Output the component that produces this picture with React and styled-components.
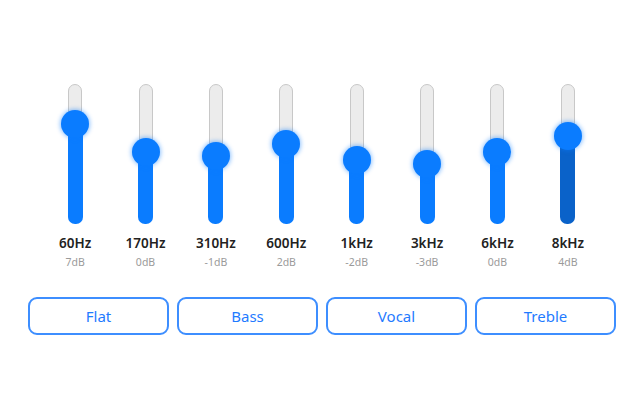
import React from "react";
import styled, { createGlobalStyle } from "styled-components";

const GlobalStyle = createGlobalStyle`
    html, body {
        margin: 0;
        padding: 0;
        background: #fff;
    }
    body {
        font-family: "Noto Sans", "Open Sans", sans-serif;
    }
`;

const Page = styled.div`
    width: 640px;
    height: 400px;
    display: flex;
    flex-direction: column;
    align-items: center;
    padding-top: 84px;
    box-sizing: border-box;
`;

const Bands = styled.div`
    display: grid;
    grid-template-columns: repeat(8, 70.4px);
    margin-left: 3px;
`;

const Band = styled.div`
    display: flex;
    flex-direction: column;
    align-items: center;
`;

const Track = styled.div`
    position: relative;
    width: 14px;
    height: 139px;
    box-sizing: border-box;
    border: 1.5px solid #c8c8c8;
    border-radius: 7px;
    background: #ececec;
`;

const Fill = styled.div`
    position: absolute;
    left: -1.5px;
    right: -1.5px;
    bottom: -1.5px;
    border-radius: 7px;
    background: ${(p) => (p.$active ? "#0a62c9" : "#0a7cff")};
`;

const Thumb = styled.div`
    position: absolute;
    left: 50%;
    width: 28px;
    height: 28px;
    margin-left: -14px;
    margin-top: -14px;
    border-radius: 50%;
    background: #0a7cff;
    box-shadow: 0 0 4px 1px rgba(10, 124, 255, 0.45);
`;

const Freq = styled.div`
    margin-top: 11px;
    font-size: 13.5px;
    font-weight: 600;
    color: #222;
    line-height: 18px;
`;

const Gain = styled.div`
    margin-top: 3px;
    font-size: 10.5px;
    color: #9a9a9a;
    line-height: 14px;
`;

const Presets = styled.div`
    display: grid;
    grid-template-columns: repeat(4, 141px);
    column-gap: 8px;
    margin-top: 28px;
    margin-left: 4px;
`;

const PresetButton = styled.button`
    height: 38px;
    border: 2px solid #3d8eff;
    border-radius: 9px;
    background: #fff;
    color: #1f7bff;
    font-family: "Noto Sans", "Open Sans", sans-serif;
    font-size: 15px;
    cursor: pointer;
`;

const bands = [
    { freq: "60Hz", gain: 7 },
    { freq: "170Hz", gain: 0 },
    { freq: "310Hz", gain: -1 },
    { freq: "600Hz", gain: 2 },
    { freq: "1kHz", gain: -2 },
    { freq: "3kHz", gain: -3 },
    { freq: "6kHz", gain: 0 },
    { freq: "8kHz", gain: 4 }
];

const presets = ["Flat", "Bass", "Vocal", "Treble"];

const TRACK = 139;

export default function App() {
    return (
        <Page>
            <GlobalStyle />
            <Bands>
                {bands.map((b, i) => {
                    const top = 68 - 4 * b.gain;
                    return (
                        <Band key={b.freq}>
                            <Track>
                                <Fill
                                    $active={i === bands.length - 1}
                                    style={{ height: TRACK - top }}
                                />
                                <Thumb style={{ top: top - 1.5 }} />
                            </Track>
                            <Freq>{b.freq}</Freq>
                            <Gain>{b.gain}dB</Gain>
                        </Band>
                    );
                })}
            </Bands>
            <Presets>
                {presets.map((p) => (
                    <PresetButton key={p}>{p}</PresetButton>
                ))}
            </Presets>
        </Page>
    );
}
